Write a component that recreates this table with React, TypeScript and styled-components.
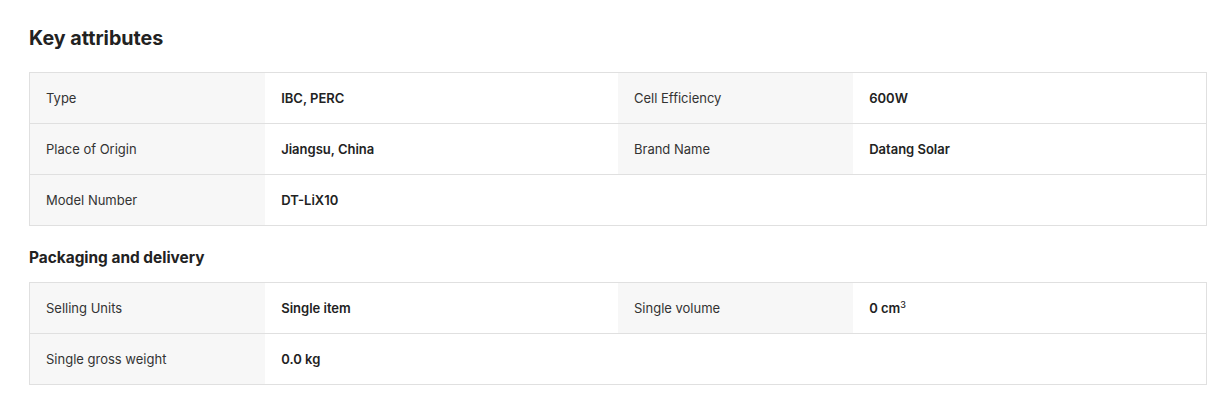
import styled, { createGlobalStyle } from 'styled-components';

const GlobalStyle = createGlobalStyle`
  body {
    margin: 0;
    background: #ffffff;
    font-family: Inter, "Open Sans", Arial, sans-serif;
  }
`;

const Page = styled.div`
  padding: 24px 7px 24px 29px;
`;

const Title = styled.h2`
  margin: 0;
  font-size: 19.7px;
  line-height: 28px;
  font-weight: 700;
  color: #222222;
`;

const SubTitle = styled.h3`
  margin: 20px 0 0 0;
  font-size: 15.4px;
  line-height: 24px;
  font-weight: 700;
  color: #222222;
`;

const Table = styled.div<{ $gap: number }>`
  margin-top: ${props => props.$gap}px;
  display: grid;
  grid-template-columns: 20% 30% 20% 30%;
  border: 1px solid #e0e0e0;
  border-bottom: none;
`;

const Cell = styled.div<{ $label?: boolean }>`
  height: 50px;
  display: flex;
  align-items: center;
  padding: 0 16px;
  border-bottom: 1px solid #e0e0e0;
  background: ${props => (props.$label ? '#f7f7f7' : '#ffffff')};
  color: ${props => (props.$label ? '#333333' : '#222222')};
  font-size: 13px;
  font-weight: ${props => (props.$label ? 400 : 600)};
  min-width: 0;
`;

const Sup = styled.sup`
  font-size: 9px;
  line-height: 0;
  vertical-align: 5px;
  font-weight: 500;
`;

type Attr = [string, React.ReactNode];

const keyAttrs: Attr[] = [
  ['Type', 'IBC, PERC'],
  ['Cell Efficiency', '600W'],
  ['Place of Origin', 'Jiangsu, China'],
  ['Brand Name', 'Datang Solar'],
  ['Model Number', 'DT-LiX10'],
];

const packaging: Attr[] = [
  ['Selling Units', 'Single item'],
  ['Single volume', <>0 cm<Sup>3</Sup></>],
  ['Single gross weight', '0.0 kg'],
];

const AttrTable = ({ items, gap }: { items: Attr[]; gap: number }) => {
  const cells = items.flatMap(([k, v], i) => [
    <Cell key={`k${i}`} $label>{k}</Cell>,
    <Cell key={`v${i}`}><span>{v}</span></Cell>,
  ]);
  if (items.length % 2 === 1) {
    cells.push(<Cell key="e1" />, <Cell key="e2" />);
  }
  return <Table $gap={gap}>{cells}</Table>;
};

export default function App() {
  return (
    <>
      <GlobalStyle />
      <Page>
        <Title>Key attributes</Title>
        <AttrTable items={keyAttrs} gap={20} />
        <SubTitle>Packaging and delivery</SubTitle>
        <AttrTable items={packaging} gap={12} />
      </Page>
    </>
  );
}
